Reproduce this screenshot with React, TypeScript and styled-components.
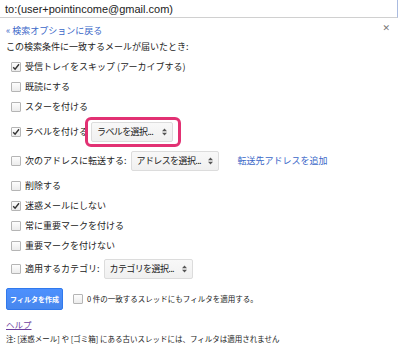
import styled, { createGlobalStyle } from 'styled-components'

const GlobalStyle = createGlobalStyle`
  html, body {
    margin: 0;
    padding: 0;
    background: #ffffff;
  }
  body {
    font-family: 'Noto Sans CJK JP', 'Noto Sans', sans-serif;
    color: #222222;
  }
`

const Page = styled.div`
  width: 400px;
  height: 348px;
  overflow: hidden;
  display: flex;
  flex-direction: column;
`

const SearchBox = styled.div`
  width: 398px;
  height: 18px;
  border-right: 1px solid #aabbe0;
  border-bottom: 1px solid #d0d0d0;
  display: flex;
  align-items: center;
  padding-left: 5px;
  box-sizing: border-box;
  font-family: 'Liberation Sans', Arial, sans-serif;
  font-size: 11px;
  color: #222;
`

const Panel = styled.div`
  display: flex;
  flex-direction: column;
  padding: 0 6px;
  font-size: 9px;
  line-height: 12px;
`

const TopRow = styled.div`
  display: flex;
  justify-content: space-between;
  align-items: center;
  height: 20px;
  margin-top: 3px;
`

const BackLink = styled.a`
  color: #3a67c8;
  text-decoration: none;
  cursor: pointer;
`

const Close = styled.span`
  color: #777;
  font-family: 'DejaVu Sans', sans-serif;
  font-size: 9px;
  margin-right: 4px;
  margin-top: -6px;
`

const Heading = styled.div`
  height: 12px;
  display: flex;
  align-items: center;
`

const Options = styled.div`
  display: flex;
  flex-direction: column;
  margin-top: 4px;
`

const Row = styled.div<{ $h?: number; $mb?: number }>`
  display: flex;
  align-items: center;
  gap: 4px;
  height: ${({ $h }) => $h ?? 20}px;
  margin-bottom: ${({ $mb }) => $mb ?? 0}px;
  padding-left: 5px;
  white-space: nowrap;
`

const Box = styled.span`
  position: relative;
  width: 8px;
  height: 8px;
  border: 1px solid #b5b5b5;
  border-radius: 1px;
  background: linear-gradient(#fdfdfd, #ececec);
  flex-shrink: 0;
`

const Tick = styled.svg`
  position: absolute;
  left: 0;
  top: 0;
`

const Select = styled.span<{ $w: number }>`
  display: inline-flex;
  align-items: center;
  justify-content: space-between;
  gap: 3px;
  width: ${({ $w }) => $w}px;
  height: 20px;
  box-sizing: border-box;
  padding: 0 5px 0 5px;
  border: 1px solid #dcdcdc;
  border-radius: 2px;
  background: linear-gradient(#f8f8f8, #f0f0f0);
  color: #222;
  font-size: 9px;
  letter-spacing: -0.6px;
`

const Arrows = styled.svg`
  flex-shrink: 0;
`

const Highlight = styled.span`
  display: inline-flex;
  padding: 2px 5px 2px 3px;
  border: 3px solid #e23173;
  border-radius: 6px;
  margin-left: -7px;
`

const AddLink = styled.a`
  color: #3a67c8;
  margin-left: 15px;
  cursor: pointer;
`

const ActionRow = styled.div`
  display: flex;
  align-items: center;
  gap: 10px;
  margin-top: 6px;
  height: 22px;
  font-size: 7.5px;
`

const CreateButton = styled.button`
  width: 57px;
  height: 22px;
  border: 1px solid #3079ed;
  border-radius: 2px;
  background: linear-gradient(#4d90fe, #4787ed);
  color: #fff;
  font-family: 'Noto Sans CJK JP', sans-serif;
  font-weight: bold;
  font-size: 7px;
  padding: 0;
  white-space: nowrap;
`

const ApplyLabel = styled.span`
  display: flex;
  align-items: center;
  gap: 4px;
  white-space: nowrap;
`

const Help = styled.a`
  margin-top: 7px;
  color: #6d3fa0;
  text-decoration: underline;
  height: 14px;
  display: flex;
  align-items: center;
  width: fit-content;
  font-size: 8.5px;
`

const Note = styled.div`
  margin-top: 1px;
  height: 14px;
  display: flex;
  align-items: center;
  font-size: 7.5px;
  white-space: nowrap;
`

const Checkbox = ({ checked }: { checked?: boolean }) => (
  <Box>
    {checked && (
      <Tick width="8" height="8" viewBox="0 0 8 8">
        <path d="M1.2 4.2 L3.1 6.2 L7 1.2" fill="none" stroke="#333" strokeWidth="1.4" />
      </Tick>
    )}
  </Box>
)

const Dropdown = ({ label, width }: { label: string; width: number }) => (
  <Select $w={width}>
    <span>{label}</span>
    <Arrows width="5" height="8" viewBox="0 0 5 8">
      <path d="M0 3.2 L2.5 0.6 L5 3.2 Z M0 4.8 L2.5 7.4 L5 4.8 Z" fill="#555" />
    </Arrows>
  </Select>
)

export default function App() {
  return (
    <Page>
      <GlobalStyle />
      <SearchBox>to:(user+pointincome@gmail.com)</SearchBox>
      <Panel>
        <TopRow>
          <BackLink>« 検索オプションに戻る</BackLink>
          <Close>✕</Close>
        </TopRow>
        <Heading>この検索条件に一致するメールが届いたとき:</Heading>
        <Options>
          <Row>
            <Checkbox checked />
            受信トレイをスキップ (アーカイブする)
          </Row>
          <Row>
            <Checkbox />
            既読にする
          </Row>
          <Row>
            <Checkbox />
            スターを付ける
          </Row>
          <Row $h={30}>
            <Checkbox checked />
            ラベルを付ける
            <Highlight>
              <Dropdown label="ラベルを選択..." width={82} />
            </Highlight>
          </Row>
          <Row $h={28} $mb={1}>
            <Checkbox />
            次のアドレスに転送する:
            <Dropdown label="アドレスを選択..." width={88} />
            <AddLink>転送先アドレスを追加</AddLink>
          </Row>
          <Row>
            <Checkbox />
            削除する
          </Row>
          <Row>
            <Checkbox checked />
            迷惑メールにしない
          </Row>
          <Row>
            <Checkbox />
            常に重要マークを付ける
          </Row>
          <Row>
            <Checkbox />
            重要マークを付けない
          </Row>
          <Row $h={26}>
            <Checkbox />
            適用するカテゴリ:
            <Dropdown label="カテゴリを選択..." width={89} />
          </Row>
        </Options>
        <ActionRow>
          <CreateButton>フィルタを作成</CreateButton>
          <ApplyLabel>
            <Checkbox />0 件の一致するスレッドにもフィルタを適用する。
          </ApplyLabel>
        </ActionRow>
        <Help>ヘルプ</Help>
        <Note>注: [迷惑メール] や [ゴミ箱] にある古いスレッドには、フィルタは適用されません</Note>
      </Panel>
    </Page>
  )
}
